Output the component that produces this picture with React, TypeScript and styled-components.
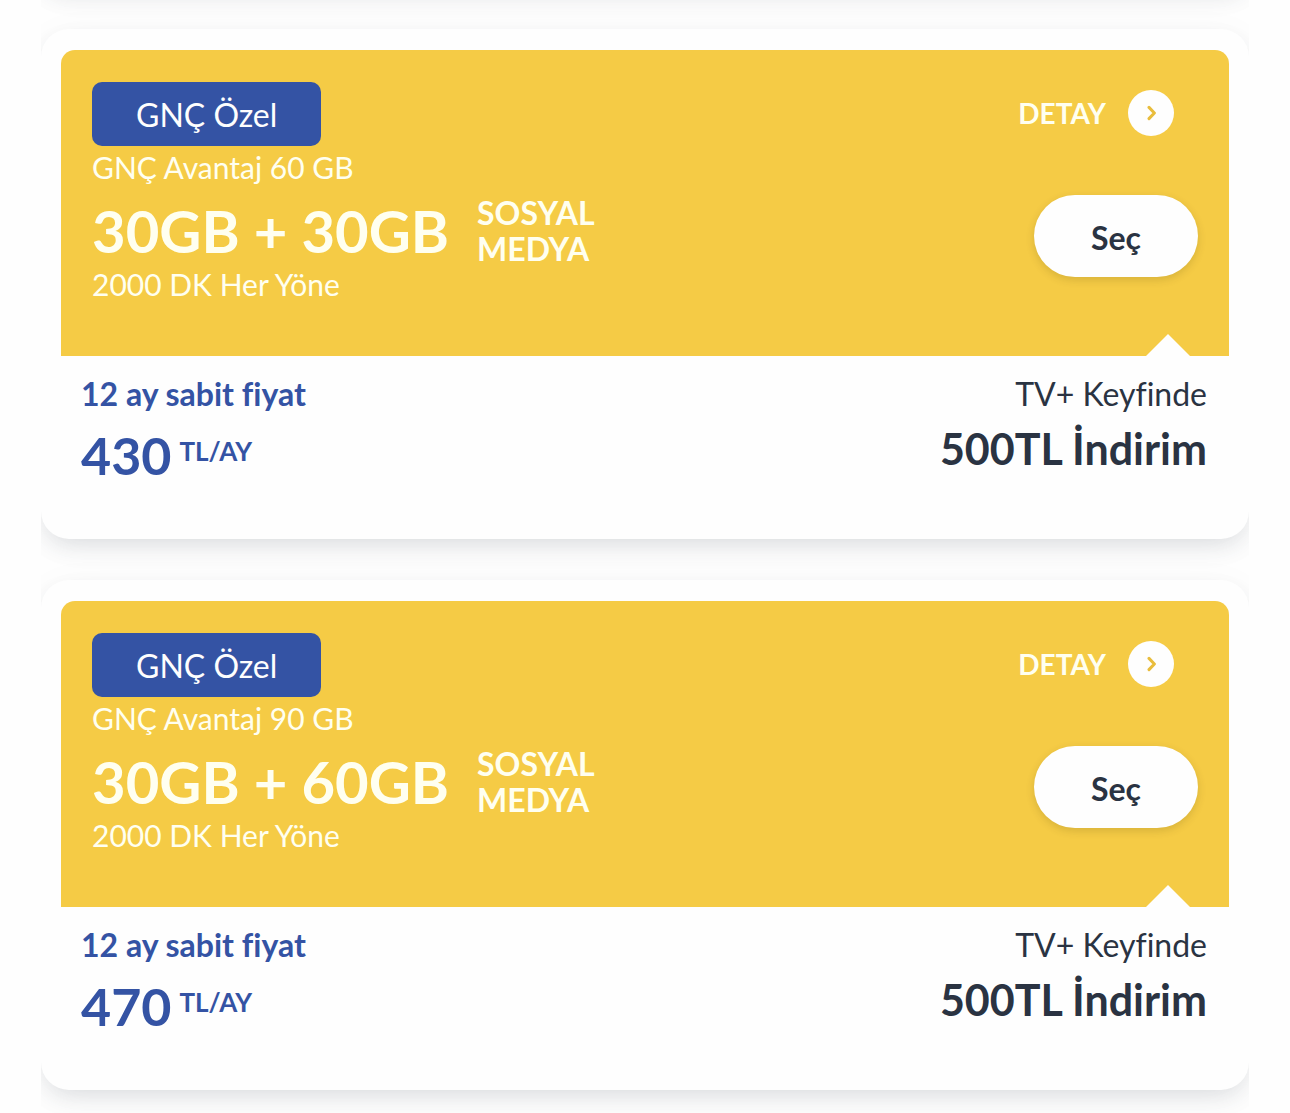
import React from "react";
import styled, { createGlobalStyle } from "styled-components";

const yellow = "#f5cb45";
const blue = "#3453a4";
const ink = "#2a3342";

const GlobalStyle = createGlobalStyle`
  *, *::before, *::after { box-sizing: border-box; }
  body {
    margin: 0;
    background: #fefefe;
    font-family: Lato, "Open Sans", sans-serif;
    font-variant-ligatures: none;
    color: ${ink};
  }
  p, h2, ul { margin: 0; padding: 0; font-weight: inherit; }
`;

const Packages = styled.main`
  margin: 0 41px;
  padding-bottom: 23px;
  overflow: hidden;
`;

const List = styled.ul`
  display: flex;
  flex-direction: column;
  gap: 41px;
  margin-top: -52px;
  list-style: none;
`;

const Card = styled.li`
  min-height: 40px;
  border-radius: 28px;
  background: #fefefe;
  box-shadow: 0 10px 24px -6px rgba(50, 60, 80, 0.16), 0 6px 40px rgba(0, 0, 0, 0.035);
`;

const Offer = styled.article`
  padding: 21px 20px 54px;
`;

const Hero = styled.div`
  position: relative;
  display: flex;
  justify-content: space-between;
  min-height: 306px;
  padding: 32px 31px;
  border-radius: 14px 14px 0 0;
  background: ${yellow};
  color: #fffff0;

  &::after {
    content: "";
    position: absolute;
    right: 39px;
    bottom: 0;
    border: solid transparent;
    border-width: 0 22px 22px;
    border-bottom-color: #fefefe;
  }
`;

const Summary = styled.div`
  display: flex;
  flex-direction: column;
  align-items: flex-start;
`;

const Badge = styled.span`
  padding: 1px 44px 0;
  margin-bottom: 4px;
  border-radius: 10px;
  background: ${blue};
  color: #fefefe;
  font-size: 32px;
  line-height: 63px;
`;

const Detail = styled.p`
  font-size: 30px;
  line-height: 34px;
`;

const Quota = styled.div`
  display: flex;
  align-items: center;
  gap: 28px;
  margin-top: 11px;
  font-weight: 700;
`;

const Amount = styled.h2`
  font-size: 58px;
  line-height: 72px;
`;

const Extra = styled.p`
  display: flex;
  flex-direction: column;
  font-size: 32px;
  line-height: 36px;
`;

const Actions = styled.div`
  display: flex;
  flex-direction: column;
  align-items: flex-end;
  padding-top: 8px;
`;

const DetailLink = styled.a`
  display: flex;
  align-items: center;
  gap: 22px;
  margin: 0 24px 59px 0;
  color: inherit;
  font-size: 28px;
  font-weight: 700;
  line-height: 46px;
  text-decoration: none;
`;

const Circle = styled.span`
  display: grid;
  place-items: center;
  width: 46px;
  height: 46px;
  border-radius: 50%;
  background: #fefefe;
`;

const SelectButton = styled.button`
  width: 164px;
  height: 82px;
  padding: 2px 0 0;
  border: 0;
  border-radius: 41px;
  background: #fefefe;
  box-shadow: 0 3px 8px rgba(60, 50, 0, 0.16);
  color: ${ink};
  font: 700 32px Lato, "Open Sans", sans-serif;
  cursor: pointer;
`;

const Footer = styled.div`
  display: flex;
  justify-content: space-between;
  padding: 18px 22px 0 20px;
`;

const Pricing = styled.div`
  color: ${blue};
  font-weight: 700;
`;

const Promo = styled.div`
  text-align: right;
`;

const Caption = styled.p`
  font-size: 32px;
  line-height: 40px;
`;

const Price = styled.p`
  display: flex;
  align-items: flex-start;
  gap: 8px;
  padding-top: 11px;
  font-size: 52px;
  line-height: 60px;
`;

const Unit = styled.span`
  font-size: 26px;
  line-height: 52px;
`;

const PromoValue = styled.p`
  padding-top: 10px;
  font-size: 43px;
  font-weight: 700;
  line-height: 50px;
`;

type Package = { name: string; quota: string; price: number };

const packages: Package[] = [
  { name: "GNÇ Avantaj 60 GB", quota: "30GB + 30GB", price: 430 },
  { name: "GNÇ Avantaj 90 GB", quota: "30GB + 60GB", price: 470 },
];

function PackageCard({ name, quota, price }: Package) {
  return (
    <Card>
      <Offer>
        <Hero>
          <Summary>
            <Badge>GNÇ Özel</Badge>
            <Detail>{name}</Detail>
            <Quota>
              <Amount>{quota}</Amount>
              <Extra>
                <span>SOSYAL</span>
                <span>MEDYA</span>
              </Extra>
            </Quota>
            <Detail>2000 DK Her Yöne</Detail>
          </Summary>
          <Actions>
            <DetailLink href="#">
              DETAY
              <Circle>
                <svg width="10" height="16" viewBox="0 0 10 16" fill="none" aria-hidden="true">
                  <path d="M3 2.4 8.4 8 3 13.6" stroke="#e9bd3c" strokeWidth="3" strokeLinecap="round" strokeLinejoin="round" />
                </svg>
              </Circle>
            </DetailLink>
            <SelectButton type="button">Seç</SelectButton>
          </Actions>
        </Hero>
        <Footer>
          <Pricing>
            <Caption>12 ay sabit fiyat</Caption>
            <Price>
              {price}
              <Unit>TL/AY</Unit>
            </Price>
          </Pricing>
          <Promo>
            <Caption>TV+ Keyfinde</Caption>
            <PromoValue>500TL İndirim</PromoValue>
          </Promo>
        </Footer>
      </Offer>
    </Card>
  );
}

export default function App() {
  return (
    <>
      <GlobalStyle />
      <Packages>
        <List>
          <Card aria-hidden="true" />
          {packages.map((item) => (
            <PackageCard key={item.name} {...item} />
          ))}
        </List>
      </Packages>
    </>
  );
}
